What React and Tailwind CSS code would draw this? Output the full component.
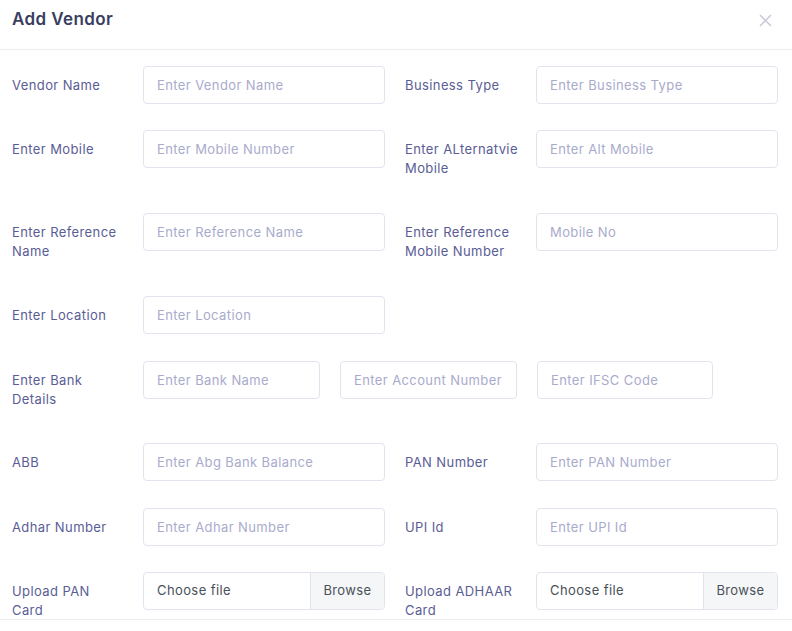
import React from "react";

const font = { fontFamily: "Inter, 'Open Sans', sans-serif", letterSpacing: "0.4px" };

const Label = ({ children }) => (
  <label className="w-[131px] shrink-0 pb-[9px] pr-2 pt-[10px] text-[13px] leading-[19px] text-[#5a5d95]">
    {children}
  </label>
);

const Input = ({ placeholder, className = "w-[242px]" }) => (
  <input
    placeholder={placeholder}
    className={`${className} h-[38px] rounded border border-[#e3e3ef] bg-white px-[13px] text-[13px] text-[#495057] outline-none placeholder:text-[#a9abcc]`}
  />
);

const FileInput = () => (
  <div className="flex h-[38px] w-[242px] overflow-hidden rounded border border-[#e3e3ef] text-[13px] text-[#495057]">
    <span className="flex flex-1 items-center px-[13px]">Choose file</span>
    <span className="flex w-[74px] items-center justify-center border-l border-[#e3e3ef] bg-[#f5f6f8]">
      Browse
    </span>
  </div>
);

const Field = ({ label, children }) => (
  <div className="flex w-[373px] items-start">
    <Label>{label}</Label>
    {children}
  </div>
);

const Row = ({ children, gap = "mb-[26px]" }) => <div className={`${gap} flex gap-5`}>{children}</div>;

export default function App() {
  return (
    <div className="h-[631px] w-[792px] overflow-hidden bg-white" style={font}>
      <div className="flex h-[50px] items-start justify-between border-b border-[#ebebf2] pl-3 pr-5 pt-[8px]">
        <h5 className="text-[17px] font-semibold leading-[22px] text-[#3a3e60]">Add Vendor</h5>
        <svg width="13" height="13" viewBox="0 0 13 13" className="mt-[6px]">
          <path d="M1 1L12 12M12 1L1 12" stroke="#c6c7da" strokeWidth="1.5" />
        </svg>
      </div>

      <div className="h-[570px] overflow-hidden border-b border-[#ebebf2] pl-3 pr-[14px] pt-4">
        <Row>
          <Field label="Vendor Name"><Input placeholder="Enter Vendor Name" /></Field>
          <Field label="Business Type"><Input placeholder="Enter Business Type" /></Field>
        </Row>
        <Row>
          <Field label="Enter Mobile"><Input placeholder="Enter Mobile Number" /></Field>
          <Field label={<>Enter ALternatvie<br />Mobile</>}><Input placeholder="Enter Alt Mobile" /></Field>
        </Row>
        <Row>
          <Field label={<>Enter Reference<br />Name</>}><Input placeholder="Enter Reference Name" /></Field>
          <Field label={<>Enter Reference<br />Mobile Number</>}><Input placeholder="Mobile No" /></Field>
        </Row>
        <Row gap="mb-[27px]">
          <Field label="Enter Location"><Input placeholder="Enter Location" /></Field>
        </Row>
        <div className="mb-[25px] flex items-start">
          <Label>Enter Bank<br />Details</Label>
          <div className="flex gap-5">
            <Input placeholder="Enter Bank Name" className="w-[177px]" />
            <Input placeholder="Enter Account Number" className="w-[177px]" />
            <Input placeholder="Enter IFSC Code" className="w-[176px]" />
          </div>
        </div>
        <Row gap="mb-[27px]">
          <Field label="ABB"><Input placeholder="Enter Abg Bank Balance" /></Field>
          <Field label="PAN Number"><Input placeholder="Enter PAN Number" /></Field>
        </Row>
        <Row>
          <Field label="Adhar Number"><Input placeholder="Enter Adhar Number" /></Field>
          <Field label="UPI Id"><Input placeholder="Enter UPI Id" /></Field>
        </Row>
        <Row>
          <Field label={<>Upload PAN<br />Card</>}><FileInput /></Field>
          <Field label={<>Upload ADHAAR<br />Card</>}><FileInput /></Field>
        </Row>
      </div>
    </div>
  );
}
